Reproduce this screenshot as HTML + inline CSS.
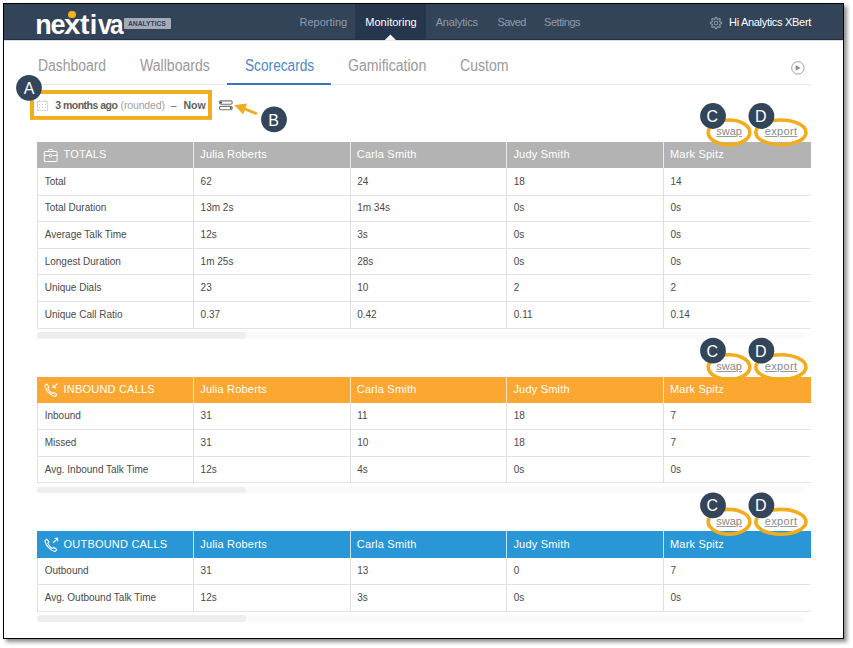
<!DOCTYPE html>
<html><head><meta charset="utf-8"><style>
html,body{margin:0;padding:0;background:#fff;width:853px;height:648px;overflow:hidden;position:relative}
body{font-family:"Liberation Sans",sans-serif}
.abs{position:absolute}
.t{position:absolute;line-height:1;white-space:nowrap}
.frame{position:absolute;left:3px;top:3px;width:841px;height:636px;box-sizing:border-box;border:1px solid #000;box-shadow:3px 3px 4px rgba(0,0,0,0.45);background:#fff}
.hdr{position:absolute;left:4px;top:4px;width:839px;height:36px;background:#334459}
.hdr-active{position:absolute;left:355.3px;top:4px;width:70.7px;height:36px;background:#26364c}
.logo{font-size:27px;font-weight:bold;color:#fff;transform-origin:0 0}
.badge{background:#a3abb7;border-radius:1px}
.nav{font-size:11px}
.tab{font-size:16px;transform-origin:0 0}
.dp{font-size:10.5px;color:#606060}
.dp.lt{color:#a0a0a0}
.th{font-size:11px;color:#fff;letter-spacing:0.2px}
.td{font-size:10px;color:#4a4a4a}
.hl{left:37px;width:774px;height:1px;background:#e3e3e3}
.vl{width:1px;background:#e0e0e0}
.lnk{font-size:11px;color:#8a8a8a;text-decoration:underline;text-decoration-thickness:1.2px;text-underline-offset:1.3px;text-decoration-color:#9a9a9a}
.lt2{font-family:"Liberation Sans",sans-serif;font-size:16px;fill:#fff;text-anchor:middle}
</style></head>
<body>

<div class="frame"></div>
<div class="hdr"></div>
<div class="hdr-active"></div>
<svg class="abs" style="left:0;top:0" width="853" height="648" viewBox="0 0 853 648">
  <rect x="4" y="39" width="839" height="1" fill="#1f2e45" opacity="0.8"/><rect x="4" y="40" width="839" height="0.5" fill="#1f2e45" opacity="0.35"/><polygon points="384.4,40.5 390.4,34.6 396.4,40.5" fill="#fff"/>
</svg>
<div class="t logo" style="left:35.2px;top:12px;transform:scaleX(1.0)">n</div><div class="t logo" style="left:50.6px;top:12px;transform:scaleX(1.0)">e</div><div class="t logo" style="left:63.9px;top:12px;transform:scaleX(1.1)">x</div><div class="t logo" style="left:80.1px;top:12px;transform:scaleX(1.05)">t</div><div class="t logo" style="left:89.8px;top:12px;transform:scaleX(1.0)">i</div><div class="t logo" style="left:97.7px;top:12px;transform:scaleX(0.93)">v</div><div class="t logo" style="left:110.2px;top:12px;transform:scaleX(0.9)">a</div><div class="abs" style="left:68.3px;top:10.8px;width:7.6px;height:7.6px;border-radius:50%;background:#f5b316"></div><div class="abs badge" style="left:124.3px;top:18.2px;width:46.3px;height:11px"></div><div class="t" style="left:128.4px;top:19.73px;font-size:8px;font-weight:bold;color:#334159;transform:scaleX(0.84);transform-origin:0 0">ANALYTICS</div><div class="t nav" style="left:299.5px;top:16.99px;color:#8e9aab;letter-spacing:0px">Reporting</div><div class="t nav" style="left:365.3px;top:16.99px;color:#ffffff;letter-spacing:0px">Monitoring</div><div class="t nav" style="left:435.7px;top:16.99px;color:#8e9aab;letter-spacing:-0.2px">Analytics</div><div class="t nav" style="left:497.5px;top:16.99px;color:#8e9aab;letter-spacing:-0.55px">Saved</div><div class="t nav" style="left:544px;top:16.99px;color:#8e9aab;letter-spacing:-0.45px">Settings</div><svg class="abs" style="left:709px;top:15.5px" width="14" height="14" viewBox="0 0 14 14">
<g fill="none" stroke="#8e9aab" stroke-width="1.05" stroke-linejoin="round">
<path d="M6.50,1.27 L7.50,1.27 L8.42,3.58 L10.70,2.60 L11.40,3.30 L10.42,5.58 L12.73,6.50 L12.73,7.50 L10.42,8.42 L11.40,10.70 L10.70,11.40 L8.42,10.42 L7.50,12.73 L6.50,12.73 L5.58,10.42 L3.30,11.40 L2.60,10.70 L3.58,8.42 L1.27,7.50 L1.27,6.50 L3.58,5.58 L2.60,3.30 L3.30,2.60 L5.58,3.58 Z"/>
<circle cx="7" cy="7" r="1.8"/>
</g></svg><div class="t nav" style="left:729px;top:16.69px;color:#ffffff;letter-spacing:-0.3px">Hi Analytics XBert</div><div class="t tab" style="left:38.2px;top:58.06px;color:#9a9a9a;transform:scaleX(0.87)">Dashboard</div><div class="t tab" style="left:140px;top:58.06px;color:#9a9a9a;transform:scaleX(0.88)">Wallboards</div><div class="t tab" style="left:244.8px;top:58.06px;color:#4f88c6;transform:scaleX(0.855)">Scorecards</div><div class="t tab" style="left:347.6px;top:58.06px;color:#9a9a9a;transform:scaleX(0.88)">Gamification</div><div class="t tab" style="left:460px;top:58.06px;color:#9a9a9a;transform:scaleX(0.88)">Custom</div><div class="abs" style="left:37px;top:84px;width:774px;height:1px;background:#e8e8e8"></div><div class="abs" style="left:227.4px;top:83px;width:103.2px;height:2px;background:#3a77bb"></div><svg class="abs" style="left:789px;top:58.7px" width="18" height="18" viewBox="0 0 18 18">
<circle cx="8.9" cy="8.9" r="6.2" fill="none" stroke="#a0a0a0" stroke-width="1"/>
<polygon points="6.7,6.0 11.5,8.9 6.7,11.8" fill="#8a8a8a"/></svg><svg class="abs" style="left:36px;top:99px" width="13" height="13" viewBox="0 0 13 13">
<g fill="none" stroke="#d9d9d9" stroke-width="1"><rect x="1.5" y="2.5" width="10" height="9"/></g>
<g fill="#d0d0d0"><rect x="3" y="1" width="1" height="2"/><rect x="9" y="1" width="1" height="2"/>
<rect x="3" y="5" width="1" height="1"/><rect x="6" y="5" width="1" height="1"/><rect x="9" y="5" width="1" height="1"/>
<rect x="3" y="8" width="1" height="1"/><rect x="6" y="8" width="1" height="1"/><rect x="9" y="8" width="1" height="1"/></g></svg><div class="t dp" style="left:55.2px;top:99.71px;font-weight:bold;letter-spacing:-0.5px">3 months ago</div><div class="t dp lt" style="left:120.6px;top:99.71px;letter-spacing:-0.15px">(rounded)</div><div class="t dp" style="left:170.8px;top:99.71px">&ndash;</div><div class="t dp" style="left:183.5px;top:99.71px;font-weight:bold">Now</div><svg class="abs" style="left:217px;top:99px" width="17" height="13" viewBox="0 0 17 13">
<g fill="none" stroke="#777" stroke-width="1.1"><rect x="2.4" y="1.9" width="12.9" height="3.3" rx="1.65"/><rect x="2.4" y="7.4" width="12.9" height="3.3" rx="1.65"/></g>
<circle cx="4" cy="3.55" r="1" fill="#333"/><circle cx="13.7" cy="9.05" r="1" fill="#555"/></svg><div class="abs" style="left:37px;top:142.0px;width:774px;height:26.4px;background:#b3b3b3"></div><div class="abs hl" style="top:194.50px"></div><div class="abs hl" style="top:221.10px"></div><div class="abs hl" style="top:247.70px"></div><div class="abs hl" style="top:274.30px"></div><div class="abs hl" style="top:300.90px"></div><div class="abs hl" style="top:327.50px"></div><div class="abs vl" style="left:37px;top:168.4px;height:159.60000000000002px"></div><div class="abs vl" style="left:192.9px;top:168.4px;height:159.60000000000002px"></div><div class="abs" style="left:192.9px;top:142.0px;width:1px;height:26.4px;background:rgba(255,255,255,0.72)"></div><div class="abs vl" style="left:349.5px;top:168.4px;height:159.60000000000002px"></div><div class="abs" style="left:349.5px;top:142.0px;width:1px;height:26.4px;background:rgba(255,255,255,0.72)"></div><div class="abs vl" style="left:506.1px;top:168.4px;height:159.60000000000002px"></div><div class="abs" style="left:506.1px;top:142.0px;width:1px;height:26.4px;background:rgba(255,255,255,0.72)"></div><div class="abs vl" style="left:662.7px;top:168.4px;height:159.60000000000002px"></div><div class="abs" style="left:662.7px;top:142.0px;width:1px;height:26.4px;background:rgba(255,255,255,0.72)"></div><svg class="abs" style="left:43px;top:148.0px" width="15" height="15" viewBox="0 0 15 15"><g fill="none" stroke="#fff" stroke-width="1"><rect x="1.3" y="3.5" width="12.8" height="10" rx="0.5"/><path d="M5.5,3.5 V2.5 Q5.5,1.5 6.5,1.5 H8.8 Q9.8,1.5 9.8,2.5 V3.5"/><path d="M1.3,7.5 H6 M9.2,7.5 H14.1"/><circle cx="7.5" cy="7.5" r="1.3"/></g></svg><div class="t th" style="left:63.6px;top:149.19px">TOTALS</div><div class="t th" style="left:200.20000000000002px;top:149.19px">Julia Roberts</div><div class="t th" style="left:356.8px;top:149.19px">Carla Smith</div><div class="t th" style="left:513.4px;top:149.19px">Judy Smith</div><div class="t th" style="left:670.0px;top:149.19px">Mark Spitz</div><div class="t td" style="left:44.7px;top:176.74px">Total</div><div class="t td" style="left:200.6px;top:176.74px">62</div><div class="t td" style="left:357.2px;top:176.74px">24</div><div class="t td" style="left:513.8000000000001px;top:176.74px">18</div><div class="t td" style="left:670.4000000000001px;top:176.74px">14</div><div class="t td" style="left:44.7px;top:203.34px">Total Duration</div><div class="t td" style="left:200.6px;top:203.34px">13m 2s</div><div class="t td" style="left:357.2px;top:203.34px">1m 34s</div><div class="t td" style="left:513.8000000000001px;top:203.34px">0s</div><div class="t td" style="left:670.4000000000001px;top:203.34px">0s</div><div class="t td" style="left:44.7px;top:229.94px">Average Talk Time</div><div class="t td" style="left:200.6px;top:229.94px">12s</div><div class="t td" style="left:357.2px;top:229.94px">3s</div><div class="t td" style="left:513.8000000000001px;top:229.94px">0s</div><div class="t td" style="left:670.4000000000001px;top:229.94px">0s</div><div class="t td" style="left:44.7px;top:256.54px">Longest Duration</div><div class="t td" style="left:200.6px;top:256.54px">1m 25s</div><div class="t td" style="left:357.2px;top:256.54px">28s</div><div class="t td" style="left:513.8000000000001px;top:256.54px">0s</div><div class="t td" style="left:670.4000000000001px;top:256.54px">0s</div><div class="t td" style="left:44.7px;top:283.14px">Unique Dials</div><div class="t td" style="left:200.6px;top:283.14px">23</div><div class="t td" style="left:357.2px;top:283.14px">10</div><div class="t td" style="left:513.8000000000001px;top:283.14px">2</div><div class="t td" style="left:670.4000000000001px;top:283.14px">2</div><div class="t td" style="left:44.7px;top:309.74px">Unique Call Ratio</div><div class="t td" style="left:200.6px;top:309.74px">0.37</div><div class="t td" style="left:357.2px;top:309.74px">0.42</div><div class="t td" style="left:513.8000000000001px;top:309.74px">0.11</div><div class="t td" style="left:670.4000000000001px;top:309.74px">0.14</div><div class="abs" style="left:37px;top:332.30px;width:766.6px;height:6.3px;border-radius:3.15px;background:#fafafa"></div><div class="abs" style="left:37px;top:332.30px;width:208.7px;height:6.3px;border-radius:3px;background:#eeeeee"></div><div class="t lnk" style="left:716.3px;top:126.39px">swap</div><div class="t lnk" style="left:764.7px;top:126.39px;letter-spacing:0.35px">export</div><div class="abs" style="left:37px;top:376.7px;width:774px;height:26.4px;background:#fca731"></div><div class="abs hl" style="top:429.20px"></div><div class="abs hl" style="top:455.80px"></div><div class="abs hl" style="top:482.40px"></div><div class="abs vl" style="left:37px;top:403.09999999999997px;height:79.80000000000001px"></div><div class="abs vl" style="left:192.9px;top:403.09999999999997px;height:79.80000000000001px"></div><div class="abs" style="left:192.9px;top:376.7px;width:1px;height:26.4px;background:rgba(255,255,255,0.72)"></div><div class="abs vl" style="left:349.5px;top:403.09999999999997px;height:79.80000000000001px"></div><div class="abs" style="left:349.5px;top:376.7px;width:1px;height:26.4px;background:rgba(255,255,255,0.72)"></div><div class="abs vl" style="left:506.1px;top:403.09999999999997px;height:79.80000000000001px"></div><div class="abs" style="left:506.1px;top:376.7px;width:1px;height:26.4px;background:rgba(255,255,255,0.72)"></div><div class="abs vl" style="left:662.7px;top:403.09999999999997px;height:79.80000000000001px"></div><div class="abs" style="left:662.7px;top:376.7px;width:1px;height:26.4px;background:rgba(255,255,255,0.72)"></div><svg class="abs" style="left:43px;top:382.0px" width="16" height="16" viewBox="0 0 15 15"><g fill="none" stroke="#fff" stroke-width="1.05" stroke-linejoin="round" transform="translate(0.3,0) scale(1.0)"><path d="M3.2,2 L5.2,4.6 L4.2,6 C5,8 6.6,9.8 8.6,10.8 L10,9.8 L12.6,11.8 L11.2,13.6 C6.5,12.6 2.4,8.4 1.4,3.6 Z"/><path d="M13.4,1.2 L9.2,5.4 M9.2,2.6 V5.4 H12"/></g></svg><div class="t th" style="left:63.6px;top:383.89px">INBOUND CALLS</div><div class="t th" style="left:200.20000000000002px;top:383.89px">Julia Roberts</div><div class="t th" style="left:356.8px;top:383.89px">Carla Smith</div><div class="t th" style="left:513.4px;top:383.89px">Judy Smith</div><div class="t th" style="left:670.0px;top:383.89px">Mark Spitz</div><div class="t td" style="left:44.7px;top:411.44px">Inbound</div><div class="t td" style="left:200.6px;top:411.44px">31</div><div class="t td" style="left:357.2px;top:411.44px">11</div><div class="t td" style="left:513.8000000000001px;top:411.44px">18</div><div class="t td" style="left:670.4000000000001px;top:411.44px">7</div><div class="t td" style="left:44.7px;top:438.04px">Missed</div><div class="t td" style="left:200.6px;top:438.04px">31</div><div class="t td" style="left:357.2px;top:438.04px">10</div><div class="t td" style="left:513.8000000000001px;top:438.04px">18</div><div class="t td" style="left:670.4000000000001px;top:438.04px">7</div><div class="t td" style="left:44.7px;top:464.63px">Avg. Inbound Talk Time</div><div class="t td" style="left:200.6px;top:464.63px">12s</div><div class="t td" style="left:357.2px;top:464.63px">4s</div><div class="t td" style="left:513.8000000000001px;top:464.63px">0s</div><div class="t td" style="left:670.4000000000001px;top:464.63px">0s</div><div class="abs" style="left:37px;top:487.20px;width:766.6px;height:6.3px;border-radius:3.15px;background:#fafafa"></div><div class="abs" style="left:37px;top:487.20px;width:208.7px;height:6.3px;border-radius:3px;background:#eeeeee"></div><div class="t lnk" style="left:716.3px;top:361.09px">swap</div><div class="t lnk" style="left:764.7px;top:361.09px;letter-spacing:0.35px">export</div><div class="abs" style="left:37px;top:531.4px;width:774px;height:26.4px;background:#2996d6"></div><div class="abs hl" style="top:583.90px"></div><div class="abs hl" style="top:610.50px"></div><div class="abs vl" style="left:37px;top:557.8px;height:53.2px"></div><div class="abs vl" style="left:192.9px;top:557.8px;height:53.2px"></div><div class="abs" style="left:192.9px;top:531.4px;width:1px;height:26.4px;background:rgba(255,255,255,0.72)"></div><div class="abs vl" style="left:349.5px;top:557.8px;height:53.2px"></div><div class="abs" style="left:349.5px;top:531.4px;width:1px;height:26.4px;background:rgba(255,255,255,0.72)"></div><div class="abs vl" style="left:506.1px;top:557.8px;height:53.2px"></div><div class="abs" style="left:506.1px;top:531.4px;width:1px;height:26.4px;background:rgba(255,255,255,0.72)"></div><div class="abs vl" style="left:662.7px;top:557.8px;height:53.2px"></div><div class="abs" style="left:662.7px;top:531.4px;width:1px;height:26.4px;background:rgba(255,255,255,0.72)"></div><svg class="abs" style="left:43px;top:536.7px" width="16" height="16" viewBox="0 0 15 15"><g fill="none" stroke="#fff" stroke-width="1.05" stroke-linejoin="round" transform="translate(0.3,0) scale(1.0)"><path d="M3.2,2 L5.2,4.6 L4.2,6 C5,8 6.6,9.8 8.6,10.8 L10,9.8 L12.6,11.8 L11.2,13.6 C6.5,12.6 2.4,8.4 1.4,3.6 Z"/><path d="M9.2,5.4 L13.4,1.2 M10.6,1.2 H13.4 V4"/></g></svg><div class="t th" style="left:63.6px;top:538.59px">OUTBOUND CALLS</div><div class="t th" style="left:200.20000000000002px;top:538.59px">Julia Roberts</div><div class="t th" style="left:356.8px;top:538.59px">Carla Smith</div><div class="t th" style="left:513.4px;top:538.59px">Judy Smith</div><div class="t th" style="left:670.0px;top:538.59px">Mark Spitz</div><div class="t td" style="left:44.7px;top:566.13px">Outbound</div><div class="t td" style="left:200.6px;top:566.13px">31</div><div class="t td" style="left:357.2px;top:566.13px">13</div><div class="t td" style="left:513.8000000000001px;top:566.13px">0</div><div class="t td" style="left:670.4000000000001px;top:566.13px">7</div><div class="t td" style="left:44.7px;top:592.73px">Avg. Outbound Talk Time</div><div class="t td" style="left:200.6px;top:592.73px">12s</div><div class="t td" style="left:357.2px;top:592.73px">3s</div><div class="t td" style="left:513.8000000000001px;top:592.73px">0s</div><div class="t td" style="left:670.4000000000001px;top:592.73px">0s</div><div class="abs" style="left:37px;top:615.30px;width:766.6px;height:6.3px;border-radius:3.15px;background:#fafafa"></div><div class="abs" style="left:37px;top:615.30px;width:208.7px;height:6.3px;border-radius:3px;background:#eeeeee"></div><div class="t lnk" style="left:716.3px;top:515.79px">swap</div><div class="t lnk" style="left:764.7px;top:515.79px;letter-spacing:0.35px">export</div><svg class="abs" style="left:0;top:0" width="853" height="648" viewBox="0 0 853 648"><ellipse cx="729" cy="132.40" rx="20.8" ry="12.4" fill="none" stroke="#f2ad1f" stroke-width="3.6"/><ellipse cx="780.9" cy="132.40" rx="25.1" ry="12.4" fill="none" stroke="#f2ad1f" stroke-width="3.6"/><circle cx="713" cy="116.00" r="12.9" fill="#33455b"/><circle cx="761.4" cy="116.00" r="12.9" fill="#33455b"/><text x="712.3" y="121.80" class="lt2">C</text><text x="760.8" y="121.80" class="lt2">D</text><ellipse cx="729" cy="367.10" rx="20.8" ry="12.4" fill="none" stroke="#f2ad1f" stroke-width="3.6"/><ellipse cx="780.9" cy="367.10" rx="25.1" ry="12.4" fill="none" stroke="#f2ad1f" stroke-width="3.6"/><circle cx="713" cy="350.70" r="12.9" fill="#33455b"/><circle cx="761.4" cy="350.70" r="12.9" fill="#33455b"/><text x="712.3" y="356.50" class="lt2">C</text><text x="760.8" y="356.50" class="lt2">D</text><ellipse cx="729" cy="521.80" rx="20.8" ry="12.4" fill="none" stroke="#f2ad1f" stroke-width="3.6"/><ellipse cx="780.9" cy="521.80" rx="25.1" ry="12.4" fill="none" stroke="#f2ad1f" stroke-width="3.6"/><circle cx="713" cy="505.40" r="12.9" fill="#33455b"/><circle cx="761.4" cy="505.40" r="12.9" fill="#33455b"/><text x="712.3" y="511.20" class="lt2">C</text><text x="760.8" y="511.20" class="lt2">D</text><rect x="32" y="92" width="178" height="25.9" fill="none" stroke="#f2ad1f" stroke-width="4"/><circle cx="29" cy="87.8" r="12.9" fill="#33455b"/><text x="29" y="93.7" class="lt2">A</text><circle cx="274" cy="119.4" r="12.9" fill="#33455b"/><text x="273.6" y="125.5" class="lt2">B</text><path d="M257,113.8 L244,108.6" stroke="#f2ad1f" stroke-width="2.8" fill="none"/><polygon points="234.2,105.1 247,103.4 243.3,114.5" fill="#f2ad1f"/></svg>
</body></html>
